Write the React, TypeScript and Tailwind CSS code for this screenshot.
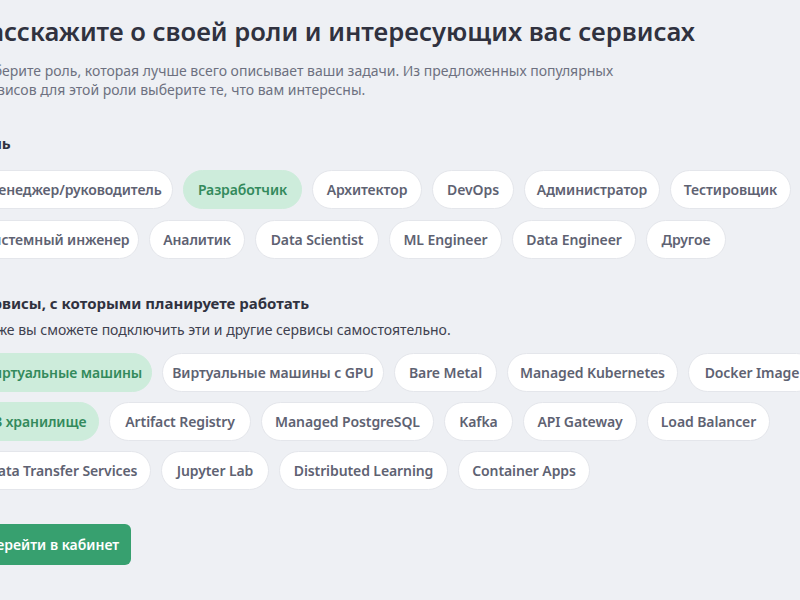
import React from "react";

type Item = { label: string; w: string; active?: boolean };

const roles: Item[] = [
  { label: "Менеджер/руководитель", w: "w-[199px]" },
  { label: "Разработчик", w: "w-[119px]", active: true },
  { label: "Архитектор", w: "w-[110px]" },
  { label: "DevOps", w: "w-[82px]" },
  { label: "Администратор", w: "w-[136px]" },
  { label: "Тестировщик", w: "w-[121px]" },
  { label: "Системный инженер", w: "w-[165px]" },
  { label: "Аналитик", w: "w-[96px]" },
  { label: "Data Scientist", w: "w-[124px]" },
  { label: "ML Engineer", w: "w-[113px]" },
  { label: "Data Engineer", w: "w-[124px]" },
  { label: "Другое", w: "w-[80px]" },
];

const services: Item[] = [
  { label: "Виртуальные машины", w: "w-[178px]", active: true },
  { label: "Виртуальные машины с GPU", w: "w-[222px]" },
  { label: "Bare Metal", w: "w-[103px]" },
  { label: "Managed Kubernetes", w: "w-[171px]" },
  { label: "Docker Image", w: "w-[128px]" },
  { label: "S3 хранилище", w: "w-[125px]", active: true },
  { label: "Artifact Registry", w: "w-[142px]" },
  { label: "Managed PostgreSQL", w: "w-[173px]" },
  { label: "Kafka", w: "w-[69px]" },
  { label: "API Gateway", w: "w-[114px]" },
  { label: "Load Balancer", w: "w-[123px]" },
  { label: "Data Transfer Services", w: "w-[177px]" },
  { label: "Jupyter Lab", w: "w-[108px]" },
  { label: "Distributed Learning", w: "w-[169px]" },
  { label: "Container Apps", w: "w-[132px]" },
];

function Chip({ item }: { item: Item }) {
  const base =
    "h-[39px] shrink-0 whitespace-nowrap rounded-full border text-center text-[14px] font-semibold leading-[20px] tracking-[-0.1px] ";
  return (
    <button
      className={
        base +
        item.w +
        (item.active
          ? " border-[#cdecdb] bg-[#cdecdb] text-[#338a5c]"
          : " border-[#e4e6eb] bg-white text-[#5e6272]")
      }
    >
      {item.label}
    </button>
  );
}

export default function App() {
  return (
    <div
      className="h-[600px] w-[800px] overflow-hidden bg-[#eef0f4]"
      style={{ fontFamily: '"Noto Sans", "Open Sans", sans-serif' }}
    >
      <div className="ml-[-26px] w-[860px] pt-[14px]">
        <h1 className="text-[25.6px] font-semibold leading-[36px] text-[#30323f]">
          Расскажите о своей роли и интересующих вас сервисах
        </h1>
        <p className="mt-[11px] max-w-[662px] text-[14px] leading-[19px] text-[#6d7080]">
          Выберите роль, которая лучше всего описывает ваши задачи. Из предложенных популярных сервисов для этой роли выберите те, что вам интересны.
        </p>
        <div className="mt-[34px] text-[15px] font-bold leading-[20px] text-[#30323f]">Роль</div>
        <div className="mt-[17px] flex flex-wrap gap-x-[10px] gap-y-[11px]">
          {roles.map((r) => (
            <Chip key={r.label} item={r} />
          ))}
        </div>
        <div className="mt-[34px] text-[15px] font-bold leading-[20px] text-[#30323f]">
          Сервисы, с которыми планируете работать
        </div>
        <div className="mt-[7px] text-[14px] leading-[19px] text-[#3e414f]">
          Также вы сможете подключить эти и другие сервисы самостоятельно.
        </div>
        <div className="mt-[14px] flex flex-wrap gap-x-[10px] gap-y-[10px]">
          {services.map((s) => (
            <Chip key={s.label} item={s} />
          ))}
        </div>
        <button className="mt-[34px] h-[41px] w-[157px] rounded-md bg-[#37a06f] text-center text-[14px] font-semibold text-white">
          Перейти в кабинет
        </button>
      </div>
    </div>
  );
}
